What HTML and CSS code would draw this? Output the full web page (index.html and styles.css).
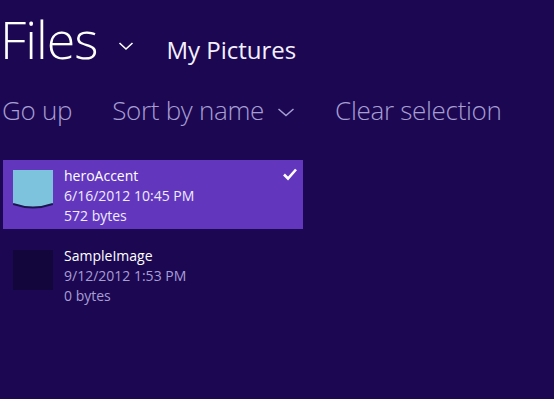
FILE: index.html
```html
<!DOCTYPE html>
<html lang="en">
<head>
    <meta charset="UTF-8">
    <meta name="viewport" content="width=device-width, initial-scale=1.0">
    <title>Files</title>
    <link rel="stylesheet" href="styles.css">
</head>
<body>
    <div class="page">
        <div class="header">
            <h1 class="title">Files</h1>
            <svg class="title-chevron" width="16" height="10" viewBox="0 0 16 10">
                <path d="M1.5 2 L8 8 L14.5 2" fill="none" stroke="#ffffff" stroke-width="1.6"/>
            </svg>
            <span class="location">My Pictures</span>
        </div>
        <div class="commands">
            <span class="command">Go up</span>
            <span class="command">Sort by name
                <svg class="command-chevron" width="18" height="10" viewBox="0 0 18 10">
                    <path d="M1.5 2 L9 8.5 L16.5 2" fill="none" stroke="#a79ed4" stroke-width="1.5"/>
                </svg>
            </span>
            <span class="command">Clear selection</span>
        </div>
        <div class="file-list">
            <div class="file-item selected">
                <svg class="thumb" width="40" height="40" viewBox="0 0 40 40">
                    <rect x="0" y="0" width="40" height="40" fill="#7dc3de"/>
                    <path d="M0 34 Q20 41 40 34 L40 40 L0 40 Z" fill="#6237be"/>
                    <path d="M0 34 Q20 41 40 34" fill="none" stroke="#1b1450" stroke-width="2"/>
                </svg>
                <div class="file-info">
                    <div class="file-name">heroAccent</div>
                    <div class="file-meta">6/16/2012 10:45 PM</div>
                    <div class="file-meta">572 bytes</div>
                </div>
                <svg class="check" width="16" height="14" viewBox="0 0 16 14">
                    <path d="M2 7.5 L6 11.5 L14 2.5" fill="none" stroke="#ffffff" stroke-width="2.6"/>
                </svg>
            </div>
            <div class="file-item">
                <div class="thumb thumb-empty"></div>
                <div class="file-info">
                    <div class="file-name">SampleImage</div>
                    <div class="file-meta">9/12/2012 1:53 PM</div>
                    <div class="file-meta">0 bytes</div>
                </div>
            </div>
        </div>
    </div>
</body>
</html>
```

FILE: styles.css
```css
html, body {
  margin: 0;
  height: 100%;
}
body {
  background-color: #1c0852;
  color: #ffffff;
  font-family: "Open Sans", "Noto Sans", sans-serif;
  overflow: hidden;
}
.page {
  padding: 8px 0 0 0;
}
.header {
  display: flex;
  align-items: baseline;
  height: 62px;
}
.title {
  margin: 0;
  font-size: 52px;
  font-weight: 300;
  line-height: 62px;
  letter-spacing: -1px;
}
.title-chevron {
  margin-left: 21px;
  margin-right: 32px;
  position: relative;
  top: -8px;
}
.location {
  font-size: 24px;
  font-weight: 400;
  color: #f4f0ff;
}
.commands {
  display: flex;
  gap: 40px;
  margin-top: 20px;
  padding-left: 2px;
}
.command {
  font-size: 26px;
  font-weight: 300;
  color: #a79ed4;
  line-height: 40px;
  display: flex;
  align-items: center;
  letter-spacing: -0.3px;
}
.command-chevron {
  margin-left: 13px;
  margin-top: 4px;
}
.file-list {
  margin-top: 30px;
  padding-left: 3px;
  display: flex;
  flex-direction: column;
  gap: 11px;
}
.file-item {
  width: 300px;
  height: 69px;
  display: flex;
  align-items: flex-start;
  box-sizing: border-box;
  padding: 10px 0 0 10px;
  position: relative;
}
.file-item.selected {
  background-color: #6237be;
}
.thumb {
  width: 40px;
  height: 40px;
  flex-shrink: 0;
}
.thumb-empty {
  background-color: #13063c;
}
.file-info {
  margin-left: 11px;
  margin-top: -4px;
  font-size: 14px;
  line-height: 20px;
}
.file-name {
  color: #ffffff;
}
.file-meta {
  color: #a79ed4;
}
.selected .file-meta {
  color: #f0ecff;
}
.check {
  position: absolute;
  top: 7px;
  right: 5px;
}
```
